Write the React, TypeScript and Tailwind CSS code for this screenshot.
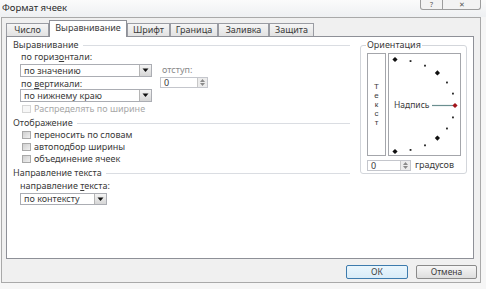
import React from "react";

const Drop = () => (
  <span className="w-[12px] h-full border-l border-[#b5b5b5] bg-gradient-to-b from-[#f4f4f4] to-[#d6d6d6] flex items-center justify-center">
    <svg width="7" height="5" viewBox="0 0 7 5">
      <path d="M0.5 0.5 H6.5 L3.5 4 Z" fill="#111" />
    </svg>
  </span>
);

const Spin = () => (
  <span className="w-[10px] h-full border-l border-[#c8c8c8] bg-[#ececec] flex flex-col items-center justify-center gap-[1px]">
    <svg width="5" height="3" viewBox="0 0 5 3"><path d="M0 3 L2.5 0 L5 3 Z" fill="#8a8a8a" /></svg>
    <svg width="5" height="3" viewBox="0 0 5 3"><path d="M0 0 L2.5 3 L5 0 Z" fill="#8a8a8a" /></svg>
  </span>
);

const Check = ({ label, disabled }: { label: string; disabled?: boolean }) => (
  <div className="flex items-center h-[12px] pl-[15px]">
    <span
      className={
        disabled
          ? "w-[9px] h-[8px] border border-[#d6d6d6] bg-[#f7f7f7]"
          : "w-[9px] h-[8px] border border-[#a9a9a9] bg-gradient-to-br from-[#cfcfcf] to-[#f0f0f0]"
      }
    />
    <span className={disabled ? "ml-[3px] text-[#a8a8a8]" : "ml-[3px]"}>{label}</span>
  </div>
);

const Heading = ({ children, className }: { children: React.ReactNode; className: string }) => (
  <div className={"flex items-center h-[12px] pl-[6px] " + className}>
    <span>{children}</span>
    <div className="flex-1 ml-[4px] h-px bg-[#dadde2]" />
  </div>
);

const tabs = [
  { t: "Число", w: "w-[43px]" },
  { t: "Выравнивание", w: "w-[78px]", sel: true },
  { t: "Шрифт", w: "w-[43px]" },
  { t: "Граница", w: "w-[48px]" },
  { t: "Заливка", w: "w-[51px]" },
  { t: "Защита", w: "w-[45px]" },
];

const angles = [90, 75, 60, 45, 30, 15, 0, -15, -30, -45, -60, -75, -90];

export default function App() {
  return (
    <div className="w-[486px] h-[289px] bg-[#f6f6f6] overflow-hidden text-[9px] leading-[12px] text-[#3a3a3a] font-['Noto_Sans',sans-serif]">
      {/* title bar */}
      <div className="h-[17px] flex items-start bg-gradient-to-b from-[#fbfbfb] to-[#eef0f2]">
        <span className="ml-[2px] mt-[2px] text-[9.5px] text-[#2a2a2a]">Формат ячеек</span>
        <div className="ml-auto mr-[5px] flex">
          <span className="w-[23px] h-[10px] border border-t-0 border-[#9d9d9d] rounded-bl-[3px] bg-[#f3f3f3] flex items-center justify-center text-[7px] leading-[8px] text-[#555]">?</span>
          <span className="w-[38px] h-[10px] border border-t-0 border-l-0 border-[#9d9d9d] rounded-br-[3px] bg-[#f3f3f3] flex items-center justify-center text-[7px] leading-[8px] text-[#555]">✕</span>
        </div>
      </div>
      {/* body */}
      <div className="ml-[1px] w-[480px] h-[266px] border border-[#a9a9a9] bg-[#f0f0f0] pl-[4px] pt-[1px] flex flex-col">
        {/* tabs */}
        <div className="flex items-end h-[17px]">
          {tabs.map((tb) =>
            tb.sel ? (
              <div
                key={tb.t}
                className={tb.w + " h-[17px] -mb-px relative z-10 bg-white border border-b-0 border-[#8e9097] flex items-center justify-center pb-[2px]"}
              >
                {tb.t}
              </div>
            ) : (
              <div
                key={tb.t}
                className={tb.w + " h-[13px] bg-gradient-to-b from-[#f6f6f6] to-[#e2e2e2] border border-b-0 border-[#9a9ca3] flex items-center justify-center"}
              >
                {tb.t}
              </div>
            )
          )}
        </div>
        {/* panel */}
        <div className="w-[468px] h-[223px] bg-white border border-[#8e9097] flex">
          {/* left column */}
          <div className="w-[343px] flex flex-col">
            <Heading className="mt-[2px]">Выравнивание</Heading>
            <div className="flex">
              <div className="flex flex-col">
                <div className="pl-[14px] h-[12px]">по гориз<span className="underline">о</span>нтали:</div>
                <div className="ml-[13px] mt-[1px] w-[132px] h-[13px] border border-[#abadb3] flex items-center">
                  <span className="flex-1 pl-[3px]">по значению</span>
                  <Drop />
                </div>
                <div className="pl-[14px] mt-[1px] h-[11px] leading-[11px]">по <span className="underline">в</span>ертикали:</div>
                <div className="ml-[13px] w-[132px] h-[13px] border border-[#abadb3] flex items-center">
                  <span className="flex-1 pl-[3px]">по нижнему краю</span>
                  <Drop />
                </div>
              </div>
              <div className="ml-[8px] flex flex-col">
                <div className="mt-[13px] pl-[2px] h-[12px] text-[#8a8a8a]">отступ:</div>
                <div className="mt-[1px] w-[48px] h-[11px] border border-[#c4c6cc] flex items-center">
                  <span className="flex-1 pl-[3px] leading-[9px]">0</span>
                  <Spin />
                </div>
              </div>
            </div>
            <div className="mt-[1px]">
              <Check label="Распределять по ширине" disabled />
            </div>
            <Heading className="mt-[2px]">Отображение</Heading>
            <Check label="переносить по словам" />
            <Check label="автоподбор ширины" />
            <Check label="объединение ячеек" />
            <Heading className="mt-[2px]">Направление текста</Heading>
            <div className="pl-[13px] mt-[1px] h-[12px]">направление <span className="underline">т</span>екста:</div>
            <div className="ml-[13px] mt-px w-[87px] h-[12px] border border-[#abadb3] flex items-center">
              <span className="flex-1 pl-[3px]">по контексту</span>
              <Drop />
            </div>
          </div>
          {/* orientation */}
          <fieldset className="ml-[10px] mt-[2px] w-[107px] h-[135px] border border-[#d3d6db] rounded-[3px] px-[5px] pb-[3px] flex flex-col">
            <legend className="px-[1px] h-[12px]">Ориентация</legend>
            <div className="ml-[1px] mt-[2px] flex gap-[2px]">
              <div className="w-[19px] h-[103px] border border-[#a4a6ab] flex flex-col items-center justify-center leading-[9px] text-[8px] font-['Liberation_Sans',sans-serif]">
                <span>Т</span>
                <span>е</span>
                <span>к</span>
                <span>с</span>
                <span>т</span>
              </div>
              <div className="w-[73px] h-[103px] border border-[#a4a6ab] relative">
                <svg width="71" height="101" viewBox="0 0 71 101" className="absolute left-0 top-0">
                  <line x1="43" y1="51.5" x2="64" y2="51.5" stroke="#6b8f90" strokeWidth="1.2" />
                  {angles.map((a) => {
                    const r = (a * Math.PI) / 180;
                    const x = 6 + 60 * Math.cos(r);
                    const y = 51.5 - 46 * Math.sin(r);
                    if (a === 0)
                      return <path key={a} d={`M${x} ${y - 2.6} L${x + 2.6} ${y} L${x} ${y + 2.6} L${x - 2.6} ${y} Z`} fill="#a3151c" />;
                    if (a % 45 === 0)
                      return <path key={a} d={`M${x} ${y - 2.6} L${x + 2.6} ${y} L${x} ${y + 2.6} L${x - 2.6} ${y} Z`} fill="#111" />;
                    return <rect key={a} x={x - 0.9} y={y - 0.9} width="1.8" height="1.8" fill="#222" />;
                  })}
                </svg>
                <span className="absolute left-[5px] top-[45px] text-[8.5px]">Надпись</span>
              </div>
            </div>
            <div className="ml-[1px] mt-[3px] flex items-center">
              <div className="w-[44px] h-[11px] border border-[#c4c6cc] flex items-center">
                <span className="flex-1 pl-[3px] leading-[9px]">0</span>
                <Spin />
              </div>
              <span className="ml-[4px]">градусов</span>
            </div>
          </fieldset>
        </div>
        {/* buttons */}
        <div className="mt-[6px] flex justify-end gap-[8px] pr-[3px]">
          <button className="w-[62px] h-[14px] border border-[#3d7bad] rounded-[2px] bg-gradient-to-b from-[#eaf6fd] to-[#d9ecf8] flex items-center justify-center text-[8.5px] leading-[10px]">
            ОК
          </button>
          <button className="w-[61px] h-[14px] border border-[#8a8a8a] rounded-[2px] bg-gradient-to-b from-[#f6f6f6] to-[#dedede] flex items-center justify-center text-[8.5px] leading-[10px]">
            Отмена
          </button>
        </div>
      </div>
    </div>
  );
}
